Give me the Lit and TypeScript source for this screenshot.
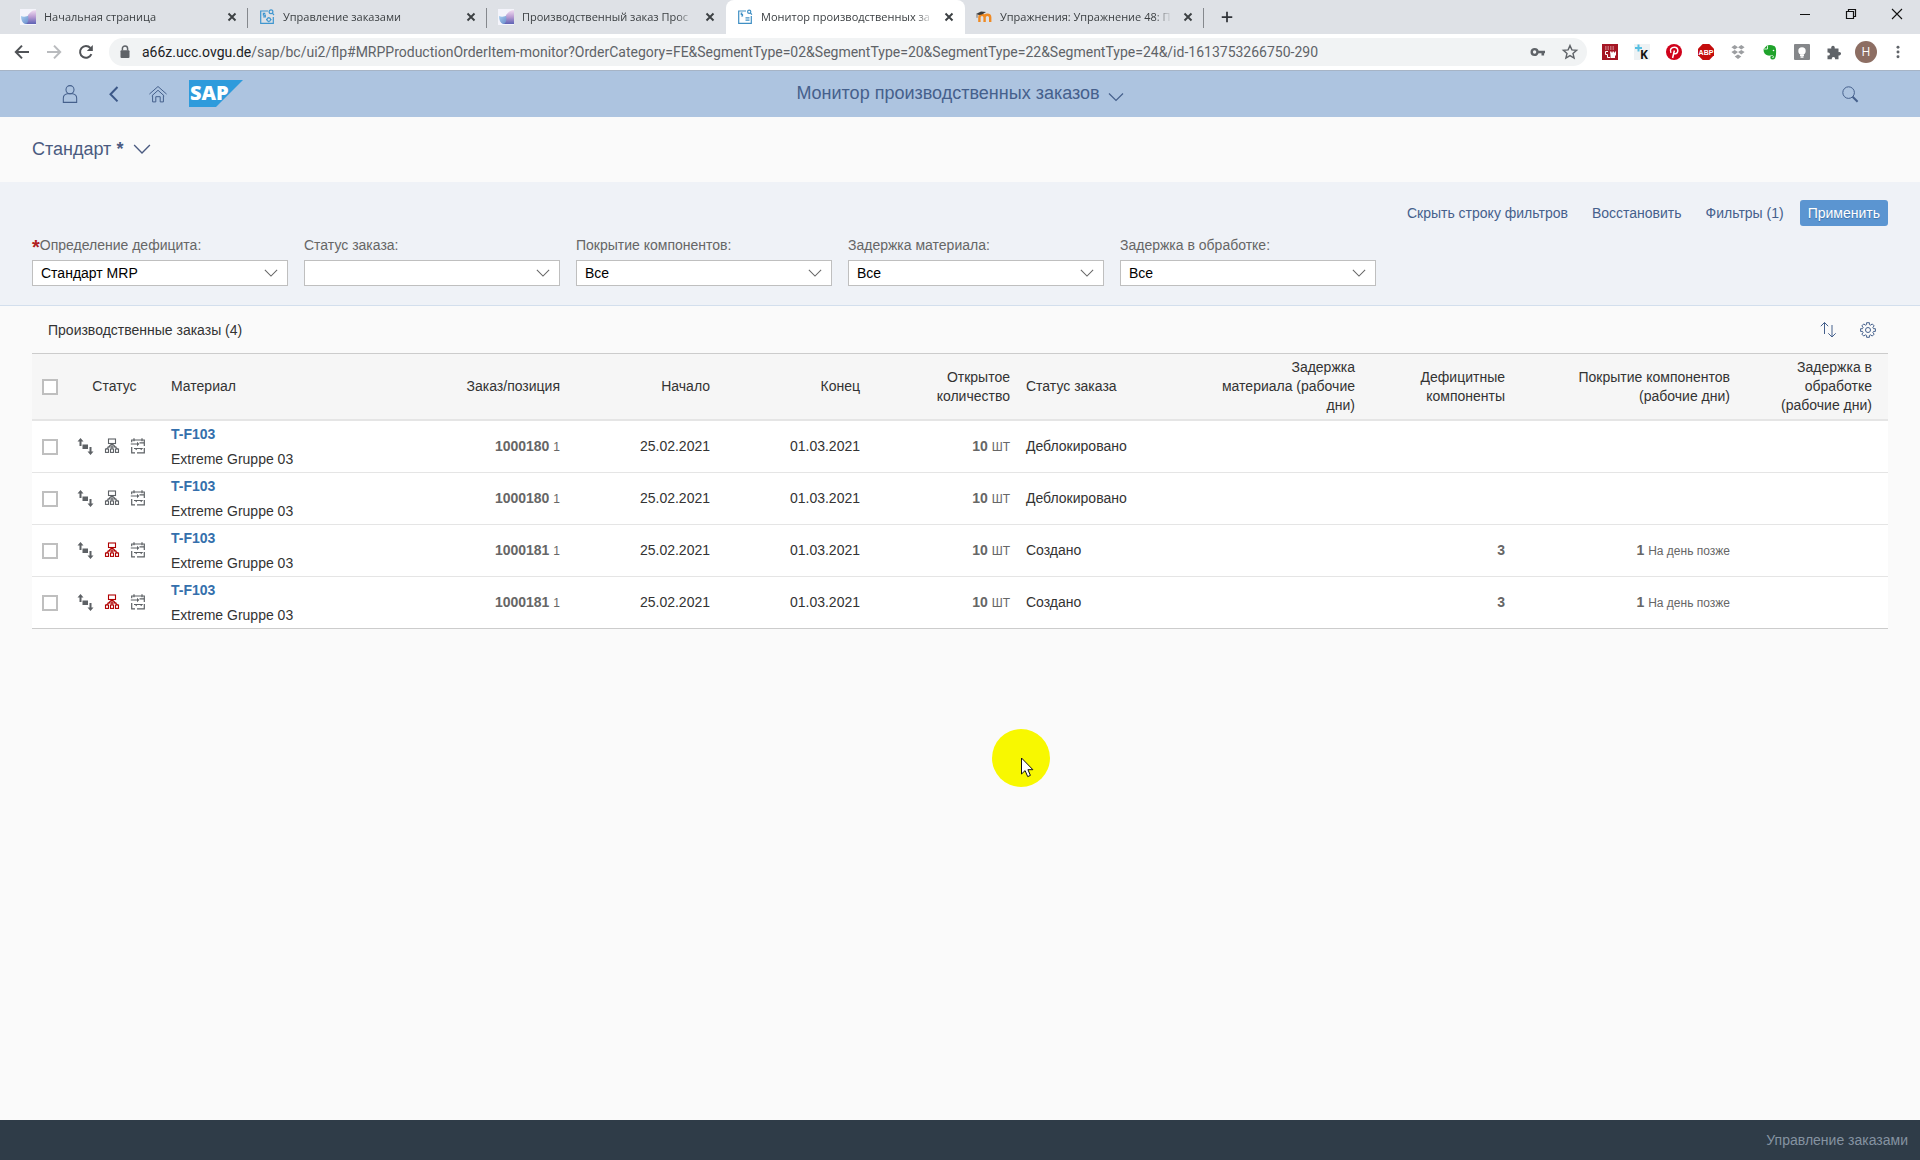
import { LitElement, html, svg, css, nothing } from "lit";
import { customElement, property } from "lit/decorators.js";

interface BrowserTab {
  title: string;
  icon: "fiori" | "manage" | "monitor" | "moodle";
  active?: boolean;
}

interface OrderRow {
  material: string;
  name: string;
  order: string;
  item: string;
  start: string;
  end: string;
  qty: string;
  status: string;
  shortage: boolean;
  missing?: string;
  coverage?: string;
}

const TABS: BrowserTab[] = [
  { title: "Начальная страница", icon: "fiori" },
  { title: "Управление заказами", icon: "manage" },
  { title: "Производственный заказ Прос", icon: "fiori" },
  { title: "Монитор производственных за", icon: "monitor", active: true },
  { title: "Упражнения: Упражнение 48: П", icon: "moodle" },
];

const FILTERS = [
  { id: "shortage", label: "Определение дефицита:", value: "Стандарт MRP", required: true },
  { id: "status", label: "Статус заказа:", value: "", required: false },
  { id: "coverage", label: "Покрытие компонентов:", value: "Все", required: false },
  { id: "material-delay", label: "Задержка материала:", value: "Все", required: false },
  { id: "processing-delay", label: "Задержка в обработке:", value: "Все", required: false },
];

const base = { material: "T-F103", name: "Extreme Gruppe 03", item: "1", start: "25.02.2021", end: "01.03.2021", qty: "10" };
const ROWS: OrderRow[] = [
  { ...base, order: "1000180", status: "Деблокировано", shortage: false },
  { ...base, order: "1000180", status: "Деблокировано", shortage: false },
  { ...base, order: "1000181", status: "Создано", shortage: true, missing: "3", coverage: "1" },
  { ...base, order: "1000181", status: "Создано", shortage: true, missing: "3", coverage: "1" },
];

const favicons = {
  fiori: svg`
    <defs>
      <linearGradient id="fa" x1="0" y1="0" x2="1" y2="1">
        <stop offset="0" stop-color="#a9d3f2"/><stop offset="1" stop-color="#5f7fc4"/>
      </linearGradient>
      <linearGradient id="fb" x1="0" y1="0" x2="0" y2="1">
        <stop offset="0" stop-color="#f3dff2"/><stop offset=".5" stop-color="#b99bd2"/><stop offset="1" stop-color="#5d62b4"/>
      </linearGradient>
    </defs>
    <rect width="16" height="16" fill="#f4f4fb"/>
    <path d="M1 7c3 1.500 6 .500 8-1l2 9H5C2.500 14 1 11 1 7z" fill="url(#fa)"/>
    <path d="M8 6c2-1.500 3-5 8-5v14H6c2-1 3-4 2-9z" fill="url(#fb)"/>`,
  manage: svg`
    <g fill="none" stroke="#3f96cf" stroke-width="1.200">
      <path d="M9 2H1.700v12.300h12.600V8"/>
      <circle cx="12" cy="2.800" r="1.900"/><path d="M13.300 4.200l1.700 1.800M6.300 4.400H4.400v1.700h1.900v1.700H4.200"/>
      <circle cx="9.800" cy="10.600" r="1.800"/><path d="M9.800 7.900v.9M9.800 12.400v.9M7.100 10.600H8M11.600 10.600h.9"/>
    </g>`,
  monitor: svg`
    <g fill="none" stroke="#3f8fc4" stroke-width="1.200">
      <path d="M9 2H1.700v12.300h12.600V7"/>
      <circle cx="12.200" cy="2.800" r="1.600"/><path d="M13.400 4l1.500 1.600M5.500 4H4.300v1.500h1.200V7H4.200M8.500 8.800h4M8.500 11.200h4"/>
    </g>`,
  moodle: svg`
    <path d="M3.400 13V8.600C3.400 6.700 4.600 5.800 6 5.800s2.600.9 2.600 2.800V13M8.600 8.600c0-1.900 1.200-2.800 2.800-2.800s2.800.9 2.800 2.800V13" fill="none" stroke="#ef8a24" stroke-width="2.400"/>
    <path d="M0 5l5-2.600 5 .6-4 2.600-3 .3z" fill="#3b3b3b"/><path d="M1 5.400v3.400" stroke="#555" stroke-width=".8"/>`,
};

const glyph = {
  close: svg`<path d="M4.500 4.500l7 7M11.500 4.500l-7 7" stroke="#3c4043" stroke-width="1.900" fill="none"/>`,
  plus: svg`<path d="M8 2v12M2 8h12" stroke="#303338" stroke-width="2" fill="none"/>`,
  back: svg`<path d="M15 8H2M8 1.600L1.800 8 8 14.400" stroke="#505357" stroke-width="2" fill="none"/>`,
  forward: svg`<path d="M1 8h13M8 1.600L14.200 8 8 14.400" stroke="#b9bbbe" stroke-width="2" fill="none"/>`,
  reload: svg`<path d="M13.400 10.200A5.900 5.900 0 1 1 12.400 4" stroke="#505357" stroke-width="2" fill="none"/><path d="M14.800 1v6H8.800z" fill="#505357"/>`,
  lock: svg`<rect x="3.500" y="6.200" width="9" height="7.800" rx="1" fill="#5f6368"/><path d="M5.400 6.400V4.600a2.600 2.600 0 0 1 5.200 0v1.800" stroke="#5f6368" stroke-width="1.500" fill="none"/>`,
  key: svg`<circle cx="4.600" cy="8" r="2.900" stroke="#5f6368" stroke-width="2.400" fill="none"/><path d="M7.600 8H15M12.800 8v3.400" stroke="#5f6368" stroke-width="2.600" fill="none"/>`,
  star: svg`<path d="M8 1.600l1.900 4.300 4.700.4-3.600 3.100 1.100 4.600L8 11.600 3.900 14 5 9.400 1.400 6.300l4.700-.4z" stroke="#5f6368" stroke-width="1.400" fill="none"/>`,
  minimize: svg`<path d="M3 8.500h10" stroke="#111" stroke-width="1"/>`,
  restore: svg`<path d="M3.500 5.500h7v7h-7zM5.500 5.500v-2h7v7h-2" stroke="#111" stroke-width="1.200" fill="none"/>`,
  exit: svg`<path d="M3 3l10 10M13 3L3 13" stroke="#111" stroke-width="1.100"/>`,
  dots: svg`<circle cx="8" cy="2.500" r="1.700" fill="#5f6368"/><circle cx="8" cy="8" r="1.700" fill="#5f6368"/><circle cx="8" cy="13.500" r="1.700" fill="#5f6368"/>`,
  user: svg`<g fill="none" stroke="#45608c" stroke-width="1"><circle cx="8" cy="4.400" r="3.800"/><path d="M1.700 16.400V12.400C1.700 10 3.400 8.600 5.400 8.200h5.200c2 .4 3.700 1.800 3.700 4.200v4z"/></g>`,
  navBack: svg`<path d="M11.500 1L4.500 8.200l7 7.200" stroke="#3b5787" stroke-width="2" fill="none"/>`,
  home: svg`<g fill="none" stroke="#45608c" stroke-width="1"><path d="M.4 8.600L9 1l8.600 7.600M2.800 10.400L9 4.800l6.200 5.600M3.600 10v6.400h3.200v-5.200h4.400v5.200h3.200V10"/></g>`,
  search: svg`<circle cx="6.600" cy="6.600" r="5.800" fill="none" stroke="#45608c" stroke-width="1"/><path d="M10.600 10.800l5 4.900" stroke="#45608c" stroke-width="2"/>`,
  chevron: svg`<path d="M1 4.500l7 7 7-7" fill="none" stroke="currentColor" stroke-width="1.200"/>`,
  sort: svg`<path d="M4.500 13V1.500M.8 5.200l3.700-3.700 3.700 3.700M12 4v12M8.300 12.300L12 16l3.700-3.700" fill="none" stroke="#45608c" stroke-width="1"/>`,
  gear: svg`<g fill="none" stroke="#45608c" stroke-width="1"><circle cx="8" cy="8" r="2.500"/><path d="M6.600.7h2.800v1.900l1.400.6 1.400-1.300 2 2-1.300 1.400.6 1.400h1.900v2.700h-1.900l-.6 1.300 1.300 1.400-2 2-1.400-1.300-1.400.6v1.900H6.600v-1.900l-1.400-.6-1.400 1.300-2-2 1.300-1.400-.6-1.300H.6V6.700h1.900l.6-1.400-1.300-1.400 2-2 1.400 1.300 1.400-.6z"/></g>`,
  flow: svg`<g fill="#5d6165"><path d="M3 0l3 3.500H4V8H2V3.500H0z"/><rect x="5" y="6.500" width="5.500" height="4.500"/><path d="M13 17l-3-3.500h2V9h2v4.500h2z"/></g>`,
  calendar: svg`<g fill="none" stroke="#5d6165" stroke-width="1.200"><path d="M4 .3v2.900M12 .3v2.900M1.700 4.200V2h12.600v2.200M.8 6h7M9.500 4.800h4.800V8M1.700 9v5.800H5M7 14.800h7.300V10M4 10.500h8.500"/></g><path d="M7 3.800L9.300 6 7 8.200zM4.500 10h3.400L6.200 12.300zM9.500 10h3.400L11.200 12.300z" fill="#5d6165"/>`,
};

const EXTENSIONS = [
  { name: "Архив", art: svg`<rect width="16" height="16" fill="#a51624"/><path d="M3 3h10M3 5h10" stroke="#e6b6ba" stroke-width="1" stroke-dasharray="1.500 1"/><path d="M6 7.500H3.500v3h2v3H8" stroke="#fff" fill="none"/><path d="M8 7.500h1.500v1h1v-1H12v1h1v-1h1v3.500l-1 1V14H8.500v-2z" fill="#fff"/>` },
  { name: "Контур", art: svg`<rect width="16" height="16" fill="#eef2f4"/><path d="M4.500.5v7M1 4h7" stroke="#56bfe2" stroke-width="2"/><text x="6" y="15" class="k">K</text>` },
  { name: "Pinterest", art: svg`<circle cx="8" cy="8" r="8" fill="#d0021b"/><path d="M6.600 14l1.800-7.500M5 8.800C3.200 5.400 5.600 3.200 8.400 3.200c4.600 0 4.200 6.600.7 6.600-.8 0-1.500-.6-1.500-1.200" stroke="#fff" stroke-width="1.500" fill="none"/>` },
  { name: "Adblock Plus", art: svg`<path d="M4.700 0h6.600L16 4.700v6.600L11.300 16H4.700L0 11.300V4.700z" fill="#c40c0c"/><text x="8" y="10.600" class="abp">ABP</text>` },
  { name: "Dropbox", art: svg`<g fill="#9c9ea1"><path d="M4.700 1L8 3.300 4.700 5.500 1.400 3.300zM11.300 1l3.300 2.300-3.300 2.200L8 3.300zM4.700 5.900L8 8.100l-3.300 2.300-3.300-2.300zM11.300 5.900l3.300 2.200-3.300 2.300L8 8.100zM8 10.400l3.300 2.200L8 14.900l-3.300-2.300z"/></g>` },
  { name: "Evernote", art: svg`<path d="M1.500 5L5 1.500C7 .5 10 .8 12 2c2 .6 2.500 4 2 8.500-.3 3-1 5-3.500 5-2 0-2.500-1.500-2-3 .4-1 2.500-.8 2.500.4-1.200 0-1 1 0 1 1.200 0 1-2-.5-2.600-2 0-3 .6-4.500.2C3 11 1.500 9 1.500 5z" fill="#20a32c"/><path d="M5.500 1.500V5H1.500" stroke="#fff" stroke-width=".8" fill="none"/><circle cx="11.500" cy="6.500" r=".8" fill="#fff"/>` },
  { name: "Заметки", art: svg`<rect width="16" height="16" rx="1" fill="#85878a"/><circle cx="8" cy="7" r="3.700" fill="#fff"/><path d="M6 11.200h4M6.500 13h3" stroke="#fff" stroke-width="1.400"/>` },
  { name: "Расширения", art: svg`<path d="M1.500 4.500h3.800c-.9-3.800 4.300-3.800 3.400 0h3.800v3.700c3.400-.9 3.400 4 0 3.200v3.900H9c.9-3.200-4-3.200-3.100 0H1.500v-3.800c3.200.8 3.200-3.800 0-3z" fill="#5f6368"/>` },
];

@customElement("ui-icon")
class UiIcon extends LitElement {
  @property({ attribute: false }) art: unknown = nothing;
  @property({ type: Number }) size = 16;
  @property() box = "0 0 16 16";
  static styles = css`
    :host { display: inline-flex; flex: none; }
    svg { display: block; overflow: visible; }
    .k { font: bold 12px "Open Sans", sans-serif; fill: #111; }
    .abp { font: bold 7px "Liberation Sans", sans-serif; fill: #fff; text-anchor: middle; }
  `;
  render() {
    return html`<svg width=${this.size} height=${this.size} viewBox=${this.box} aria-hidden="true">${this.art}</svg>`;
  }
}

@customElement("browser-chrome")
class BrowserChrome extends LitElement {
  static styles = css`
    :host { display: block; font: 11px/16px "Open Sans", "Noto Sans", sans-serif; color: #3c4043; }
    button { border: 0; padding: 0; background: none; display: flex; align-items: center; justify-content: center; font: inherit; color: inherit; }
    .strip { display: flex; height: 34px; background: #dee1e6; padding-left: 9px; }
    .tab { display: flex; align-items: center; gap: 8px; width: 239px; padding: 0 8px 0 11px; box-sizing: border-box; position: relative; }
    .tab.line::after { content: ""; position: absolute; right: 0; top: 8px; height: 20px; width: 1px; background: #85888d; }
    .tab.active { background: #fff; border-radius: 8px 8px 0 0; }
    .title { flex: 1; white-space: nowrap; mask-image: linear-gradient(90deg, #000 90%, transparent); }
    .new { width: 46px; }
    .win { display: flex; margin-left: auto; height: 28px; }
    .win button { width: 46px; }
    .bar { display: flex; align-items: center; box-sizing: border-box; height: 37px; background: #fff; padding: 0 6px; border-bottom: 1px solid #a6b4c6; }
    .nav { width: 32px; height: 32px; }
    .omni { flex: 1; display: flex; align-items: center; height: 28px; margin: 0 7px; padding: 0 1px 0 8px; border-radius: 14px; background: #f1f3f4; }
    .url { flex: 1; min-width: 0; margin-left: 9px; font: 14px/20px Roboto, "Open Sans", sans-serif; color: #5f6368; white-space: nowrap; }
    .host { color: #202124; }
    .avatar { width: 22px; border-radius: 50%; background: #8d6e63; color: #fff; font-size: 12px; line-height: 22px; }
  `;
  render() {
    return html`
      <div class="strip" role="tablist">
        ${TABS.map((t, i) => html`
          <div class="tab ${t.active ? "active" : i !== 2 ? "line" : ""}" role="tab" aria-selected=${t.active ? "true" : "false"}>
            <ui-icon .art=${favicons[t.icon]}></ui-icon>
            <span class="title">${t.title}</span>
            <button aria-label="Закрыть вкладку"><ui-icon .art=${glyph.close}></ui-icon></button>
          </div>`)}
        <button class="new" aria-label="Новая вкладка"><ui-icon .size=${14} .art=${glyph.plus}></ui-icon></button>
        <div class="win">
          <button aria-label="Свернуть"><ui-icon .art=${glyph.minimize}></ui-icon></button>
          <button aria-label="Восстановить окно"><ui-icon .art=${glyph.restore}></ui-icon></button>
          <button aria-label="Закрыть"><ui-icon .art=${glyph.exit}></ui-icon></button>
        </div>
      </div>
      <div class="bar">
        <button class="nav" aria-label="Назад"><ui-icon .art=${glyph.back}></ui-icon></button>
        <button class="nav" aria-label="Вперёд"><ui-icon .art=${glyph.forward}></ui-icon></button>
        <button class="nav" aria-label="Обновить"><ui-icon .art=${glyph.reload}></ui-icon></button>
        <div class="omni">
          <ui-icon .art=${glyph.lock}></ui-icon>
          <span class="url" role="textbox" aria-label="Адрес"><span class="host">a66z.ucc.ovgu.de</span>/sap/bc/ui2/flp#MRPProductionOrderItem-monitor?OrderCategory=FE&amp;SegmentType=02&amp;SegmentType=20&amp;SegmentType=22&amp;SegmentType=24&amp;/id-1613753266750-290</span>
          <button class="nav" aria-label="Пароли"><ui-icon .art=${glyph.key}></ui-icon></button>
          <button class="nav" aria-label="Закладка"><ui-icon .art=${glyph.star}></ui-icon></button>
        </div>
        ${EXTENSIONS.map((e) => html`<button class="nav" aria-label=${e.name}><ui-icon .art=${e.art}></ui-icon></button>`)}
        <button class="nav" aria-label="Профиль"><span class="avatar">H</span></button>
        <button class="nav" aria-label="Меню"><ui-icon .size=${14} .art=${glyph.dots}></ui-icon></button>
      </div>`;
  }
}

@customElement("shell-header")
class ShellHeader extends LitElement {
  static styles = css`
    :host { display: block; }
    header { display: grid; grid-template-columns: 1fr auto 1fr; align-items: center; height: 46px; box-sizing: border-box; padding-bottom: 1px; background: #adc4e0; color: #45608c; font: 18px/24px "Liberation Sans", Arial, sans-serif; }
    button { border: 0; padding: 0; background: none; display: flex; align-items: center; justify-content: center; font: inherit; color: inherit; }
    .left { display: flex; align-items: center; padding-left: 48px; }
    .left button { width: 44px; }
    .logo { margin-left: 9px; display: block; }
    .logo svg { display: block; overflow: visible; }
    .logo text { font: 800 20px "Open Sans", sans-serif; fill: #fff; }
    .title { gap: 8px; align-items: flex-end; padding-bottom: 2px; }
    .right { display: flex; justify-content: flex-end; padding-right: 48px; }
    .right button { width: 44px; }
  `;
  render() {
    return html`<header>
      <div class="left">
        <button aria-label="Профиль"><ui-icon .size=${18} .box=${"0 0 16 17"} .art=${glyph.user}></ui-icon></button>
        <button aria-label="Назад"><ui-icon .art=${glyph.navBack}></ui-icon></button>
        <button aria-label="Главная"><ui-icon .size=${18} .box=${"0 0 18 17"} .art=${glyph.home}></ui-icon></button>
        <a class="logo" href="#home" aria-label="SAP"><svg width="54" height="27" viewBox="0 0 54 27">
          <path d="M0 0h54L27 27H0z" fill="#2e9bdc"/>
          <text x="1" y="20">SAP</text>
        </svg></a>
      </div>
      <button class="title">Монитор производственных заказов <ui-icon .art=${glyph.chevron}></ui-icon></button>
      <div class="right"><button aria-label="Поиск"><ui-icon .art=${glyph.search}></ui-icon></button></div>
    </header>`;
  }
}

@customElement("filter-bar")
class FilterBar extends LitElement {
  static styles = css`
    :host { display: block; background: #eff2f7; border-bottom: 1px solid #d3dfed; padding: 18px 32px 19px; font: 14px/18px "Liberation Sans", Arial, sans-serif; }
    .actions { display: flex; justify-content: flex-end; gap: 8px; }
    button { border: 0; background: none; height: 26px; padding: 0 8px; font: inherit; color: #45608c; }
    .go { background: #5b95d1; color: #fff; border-radius: 3px; text-shadow: 0 1px 1px #3d6fa5; }
    .fields { display: grid; grid-template-columns: repeat(auto-fill, 256px); gap: 16px; padding-top: 10px; }
    .field { display: flex; flex-direction: column; gap: 6px; }
    label { color: #666; }
    .req { color: #b02020; font-weight: bold; font-size: 20px; line-height: 0; vertical-align: -4px; }
    .box { display: grid; align-items: center; }
    select, .arrow { grid-area: 1 / 1; }
    select { appearance: none; height: 26px; border: 1px solid #bfbfbf; border-radius: 0; background: #fff; color: #000; font: inherit; padding: 0 32px 0 8px; }
    .arrow { justify-self: end; margin-right: 10px; color: #666; pointer-events: none; }
  `;
  render() {
    return html`
      <div class="actions">
        <button>Скрыть строку фильтров</button>
        <button>Восстановить</button>
        <button>Фильтры (1)</button>
        <button class="go">Применить</button>
      </div>
      <div class="fields">
        ${FILTERS.map((f) => html`<div class="field">
          <label for=${f.id}>${f.required ? html`<span class="req">*</span>` : nothing}${f.label}</label>
          <div class="box">
            <select id=${f.id}><option>${f.value}</option></select>
            <ui-icon class="arrow" .size=${14} .art=${glyph.chevron}></ui-icon>
          </div>
        </div>`)}
      </div>`;
  }
}

@customElement("orders-table")
class OrdersTable extends LitElement {
  static styles = css`
    :host { display: block; padding: 0 32px; font: 14px/19px "Liberation Sans", Arial, sans-serif; color: #333; }
    .tools { display: flex; align-items: center; height: 47px; padding-left: 16px; }
    h2 { flex: 1; margin: 0; padding-top: 2px; font: inherit; }
    .tools button { width: 40px; height: 32px; border: 0; padding: 0; background: none; display: flex; align-items: center; justify-content: center; }
    table { width: 100%; table-layout: fixed; border-collapse: separate; border-spacing: 0; background: #fff; border-top: 1px solid #ccc; }
    th { height: 65px; padding: 0 8px; font-weight: normal; text-align: left; background: #f6f6f6; border-bottom: 2px solid #e5e5e5; }
    td { height: 51px; padding: 0 8px; border-bottom: 1px solid #e5e5e5; }
    tr:last-child td { border-bottom-color: #ccc; }
    .num { text-align: right; }
    .center { text-align: center; }
    th:first-child, td:first-child { padding: 0 0 0 10px; }
    th:last-child, td:last-child { padding-right: 16px; }
    input { appearance: none; display: block; margin: 0; width: 16px; height: 16px; box-sizing: border-box; border: 2px solid #bfbfbf; background: #fff; }
    .icons { display: flex; gap: 10px; padding-left: 3px; }
    .icons ui-icon { color: #5d6165; }
    .icons .bad { color: #b00000; }
    a, .name { display: block; line-height: 25px; }
    a { color: #346fac; font-weight: bold; text-decoration: none; }
    .strong { font-weight: bold; color: #666; }
    .unit { font-size: 12px; color: #666; }
    .select { width: 34px; } .status { width: 97px; } .order { width: 150px; }
    .std { width: 150px; } .state { width: 195px; } .wide { width: 225px; }
  `;
  render() {
    const tree = svg`<g fill="none" stroke="currentColor" stroke-width="1.100"><rect x="4.500" y="1" width="7" height="4.500"/><path d="M8 5.500V11M2.500 11L7 6.500h2l4.500 4.500M3.500 9h9"/><rect x="1.500" y="11" width="3" height="3.400"/><rect x="6.500" y="11" width="3" height="3.400"/><rect x="11.500" y="11" width="3" height="3.400"/></g>`;
    return html`
      <div class="tools">
        <h2>Производственные заказы (4)</h2>
        <button aria-label="Сортировка"><ui-icon .size=${17} .box=${"0 0 17 17"} .art=${glyph.sort}></ui-icon></button>
        <button aria-label="Настройки"><ui-icon .art=${glyph.gear}></ui-icon></button>
      </div>
      <table>
        <colgroup>
          <col class="select"><col class="status"><col><col class="order"><col class="std"><col class="std"><col class="std">
          <col class="state"><col class="std"><col class="std"><col class="wide"><col class="std">
        </colgroup>
        <thead><tr>
          <th><input type="checkbox" aria-label="Выбрать все"></th>
          <th class="center">Статус</th>
          <th>Материал</th>
          <th class="num">Заказ/позиция</th>
          <th class="num">Начало</th>
          <th class="num">Конец</th>
          <th class="num">Открытое количество</th>
          <th>Статус заказа</th>
          <th class="num">Задержка материала (рабочие дни)</th>
          <th class="num">Дефицитные компоненты</th>
          <th class="num">Покрытие компонентов (рабочие дни)</th>
          <th class="num">Задержка в обработке (рабочие дни)</th>
        </tr></thead>
        <tbody>
          ${ROWS.map((r) => html`<tr>
            <td><input type="checkbox" aria-label="Выбрать заказ ${r.order}"></td>
            <td><div class="icons">
              <ui-icon .size=${17} .box=${"0 0 16 17"} .art=${glyph.flow}></ui-icon>
              <ui-icon class=${r.shortage ? "bad" : ""} .art=${tree}></ui-icon>
              <ui-icon .art=${glyph.calendar}></ui-icon>
            </div></td>
            <td><a href="#material">${r.material}</a><span class="name">${r.name}</span></td>
            <td class="num"><span class="strong">${r.order}</span> <span class="unit">${r.item}</span></td>
            <td class="num">${r.start}</td>
            <td class="num">${r.end}</td>
            <td class="num"><span class="strong">${r.qty}</span> <span class="unit">ШТ</span></td>
            <td>${r.status}</td>
            <td></td>
            <td class="num"><span class="strong">${r.missing ?? ""}</span></td>
            <td class="num">${r.coverage ? html`<span class="strong">${r.coverage}</span> <span class="unit">На день позже</span>` : nothing}</td>
            <td></td>
          </tr>`)}
        </tbody>
      </table>`;
  }
}

@customElement("app-root")
class AppRoot extends LitElement {
  static styles = css`
    :host { display: flex; flex-direction: column; min-height: 100vh; position: relative; background: #fafafa; font-family: "Liberation Sans", Arial, sans-serif; }
    .variant { display: flex; align-items: center; box-sizing: border-box; height: 65px; padding: 0 32px 2px; }
    .variant button { display: flex; align-items: center; gap: 10px; border: 0; padding: 0; background: none; font: 18px/24px "Liberation Sans", Arial, sans-serif; color: #4a5a80; }
    .star { font-weight: bold; }
    main { flex: 1; }
    footer { display: flex; align-items: center; justify-content: flex-end; height: 40px; padding: 0 12px; background: #2f3c48; color: #8593a1; font-size: 14px; }
    .pointer { position: absolute; left: 992px; top: 729px; }
    .pointer svg { display: block; }
  `;
  render() {
    return html`
      <browser-chrome></browser-chrome>
      <shell-header></shell-header>
      <div class="variant"><button><span>Стандарт <span class="star">*</span></span><ui-icon .size=${18} .art=${glyph.chevron}></ui-icon></button></div>
      <filter-bar></filter-bar>
      <main><orders-table></orders-table></main>
      <footer>Управление заказами</footer>
      <div class="pointer"><svg width="58" height="58" viewBox="0 0 58 58" aria-hidden="true">
        <circle cx="29" cy="29" r="29" fill="#f8f800"/>
        <path d="M29.500 29v16l3.600-3.400 2.600 6 2.700-1.200-2.500-5.700h5z" fill="#fff" stroke="#111" stroke-width="1"/>
      </svg></div>`;
  }
}
